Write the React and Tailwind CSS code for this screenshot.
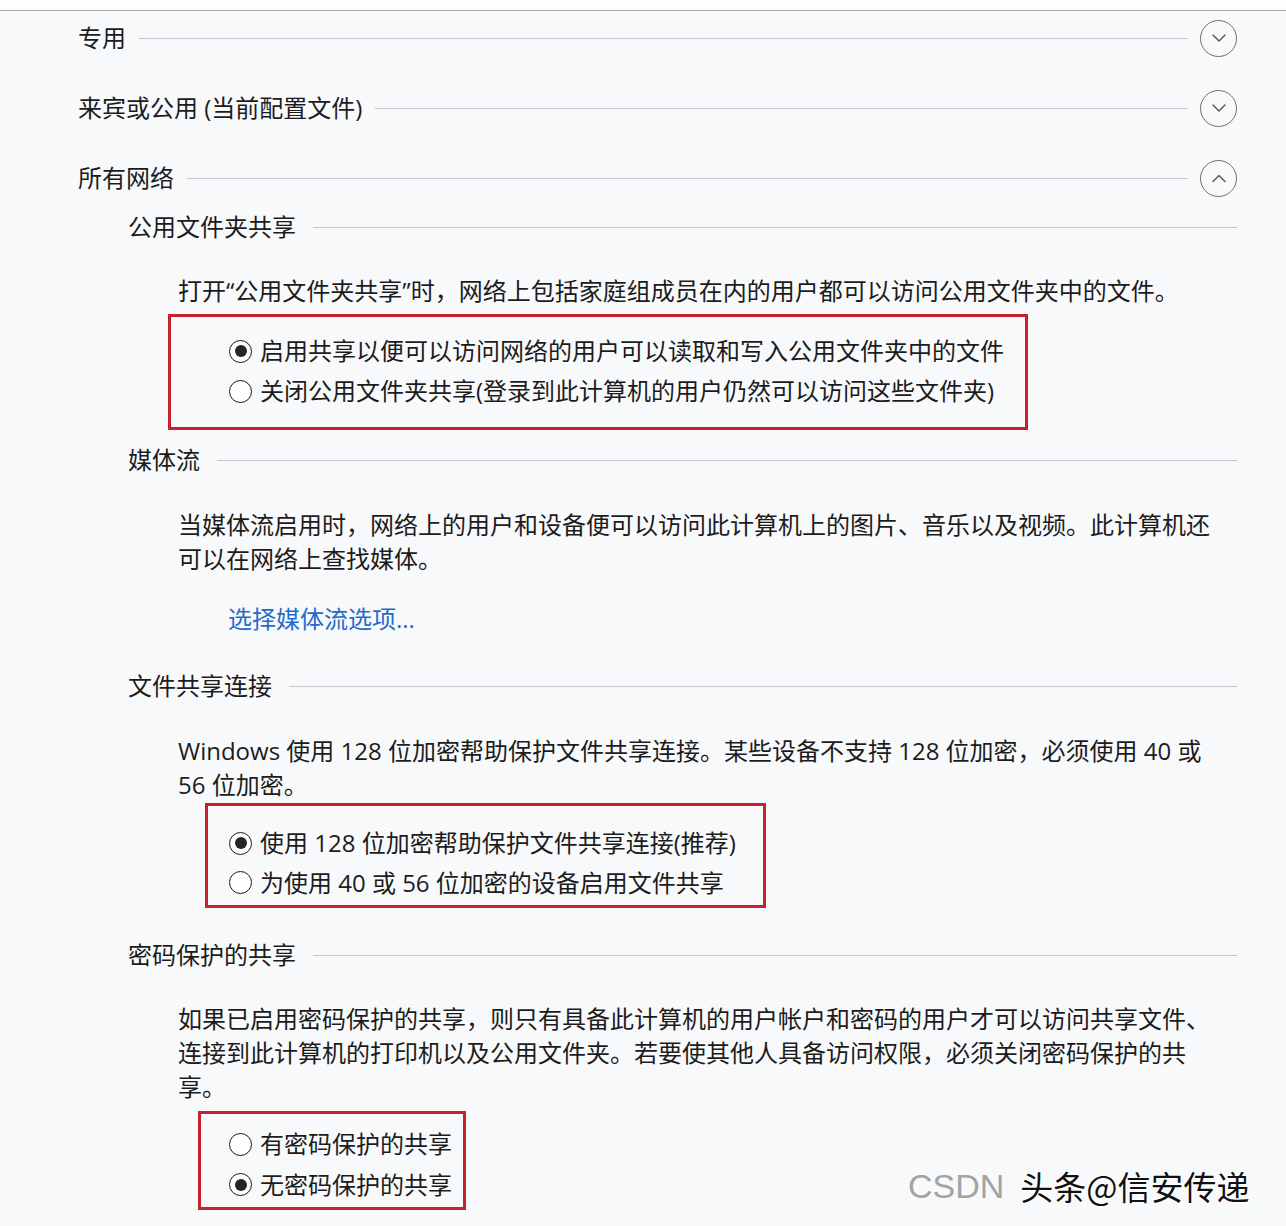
import React from 'react';

const FONT = "font-['Open_Sans','Noto_Sans_CJK_SC',sans-serif]";

function Chevron({ up }) {
  return (
    <div className="ml-[12px] flex h-[37px] w-[37px] shrink-0 items-center justify-center rounded-full border-[1.5px] border-[#6e6e6e]">
      <svg width="16" height="10" viewBox="0 0 16 10" fill="none">
        <polyline
          points={up ? '2,8.5 8,2.5 14,8.5' : '2,2 8,8 14,2'}
          stroke="#5c5c5c"
          strokeWidth="1.5"
          strokeLinecap="round"
          strokeLinejoin="round"
        />
      </svg>
    </div>
  );
}

function MainHeader({ title, up, className = '' }) {
  return (
    <div className={`flex h-[54px] items-center pl-[78px] pr-[49px] ${className}`}>
      <span className="whitespace-nowrap text-[24px]">{title}</span>
      <div className="ml-[13px] h-px flex-1 bg-[#c4c8cd]" />
      <Chevron up={up} />
    </div>
  );
}

function SubHeader({ title, className = '' }) {
  return (
    <div className={`flex h-[34px] items-center pl-[128px] pr-[49px] ${className}`}>
      <span className="whitespace-nowrap text-[24px]">{title}</span>
      <div className="ml-[17px] h-px flex-1 bg-[#c4c8cd]" />
    </div>
  );
}

function Para({ lines, className = '' }) {
  return (
    <div className={`pl-[178px] text-[24px] leading-[34px] ${className}`}>
      {lines.map((l) => (
        <div key={l} className="whitespace-nowrap">{l}</div>
      ))}
    </div>
  );
}

function Radio({ checked, label, h }) {
  return (
    <div className={`flex items-center ${h}`}>
      <div className="flex h-[23px] w-[23px] shrink-0 items-center justify-center rounded-full border-[1.5px] border-[#1a1a1a] bg-white">
        {checked && <div className="h-[12px] w-[12px] rounded-full bg-[#262626]" />}
      </div>
      <span className="ml-[8px] whitespace-nowrap text-[24px]">{label}</span>
    </div>
  );
}

export default function App() {
  return (
    <div className={`relative h-[1226px] w-full overflow-hidden bg-[#f8f9fb] text-[#1c1c1c] ${FONT}`}>
      <div className="h-[11px] border-b border-[#a9adb3] bg-[#fdfdfd]" />

      {/* 网络配置文件 */}
      <MainHeader title="专用" />
      <MainHeader title="来宾或公用 (当前配置文件)" className="mt-[16px]" />
      <MainHeader title="所有网络" up className="mt-[16px]" />

      {/* 公用文件夹共享 */}
      <SubHeader title="公用文件夹共享" className="mt-[5px]" />
      <Para
        className="mt-[30px]"
        lines={['打开“公用文件夹共享”时，网络上包括家庭组成员在内的用户都可以访问公用文件夹中的文件。']}
      />
      <div className="ml-[168px] mt-[6px] w-[860px] border-[3px] border-[#c5222c] pb-[16px] pl-[58px] pt-[14px]">
        <Radio h="h-[40px]" checked label="启用共享以便可以访问网络的用户可以读取和写入公用文件夹中的文件" />
        <Radio h="h-[40px]" label="关闭公用文件夹共享(登录到此计算机的用户仍然可以访问这些文件夹)" />
      </div>

      {/* 媒体流 */}
      <SubHeader title="媒体流" className="mt-[13px]" />
      <Para
        className="mt-[31px]"
        lines={[
          '当媒体流启用时，网络上的用户和设备便可以访问此计算机上的图片、音乐以及视频。此计算机还',
          '可以在网络上查找媒体。',
        ]}
      />
      <div className="mt-[26px] h-[34px] pl-[228px] text-[24px] leading-[34px] text-[#1f6ccc]">
        选择媒体流选项...
      </div>

      {/* 文件共享连接 */}
      <SubHeader title="文件共享连接" className="mt-[33px]" />
      <Para
        className="mt-[31px]"
        lines={[
          'Windows 使用 128 位加密帮助保护文件共享连接。某些设备不支持 128 位加密，必须使用 40 或',
          '56 位加密。',
        ]}
      />
      <div className="ml-[205px] mt-[1px] w-[561px] border-[3px] border-[#c5222c] pb-[3px] pl-[21px] pt-[17px]">
        <Radio h="h-[40px]" checked label="使用 128 位加密帮助保护文件共享连接(推荐)" />
        <Radio h="h-[39px]" label="为使用 40 或 56 位加密的设备启用文件共享" />
      </div>

      {/* 密码保护的共享 */}
      <SubHeader title="密码保护的共享" className="mt-[30px]" />
      <Para
        className="mt-[30px]"
        lines={[
          '如果已启用密码保护的共享，则只有具备此计算机的用户帐户和密码的用户才可以访问共享文件、',
          '连接到此计算机的打印机以及公用文件夹。若要使其他人具备访问权限，必须关闭密码保护的共',
          '享。',
        ]}
      />
      <div className="ml-[198px] mt-[7px] w-[268px] border-[3px] border-[#c5222c] pb-[2px] pl-[28px] pt-[10px]">
        <Radio h="h-[40px]" label="有密码保护的共享" />
        <Radio h="h-[41px]" checked label="无密码保护的共享" />
      </div>

      {/* 水印 */}
      <div className="absolute left-[908px] top-[1164px] flex items-center">
        <span className="font-['Liberation_Sans',sans-serif] text-[34px] leading-[44px] text-[#a3a3a3]">CSDN</span>
        <span className="ml-[16px] font-['Noto_Sans_CJK_SC',sans-serif] text-[33px] leading-[44px] text-[#111] [text-shadow:1px_1px_0_#fff,-1px_-1px_0_#fff,1px_-1px_0_#fff,-1px_1px_0_#fff]">
          头条@信安传递
        </span>
      </div>
    </div>
  );
}
